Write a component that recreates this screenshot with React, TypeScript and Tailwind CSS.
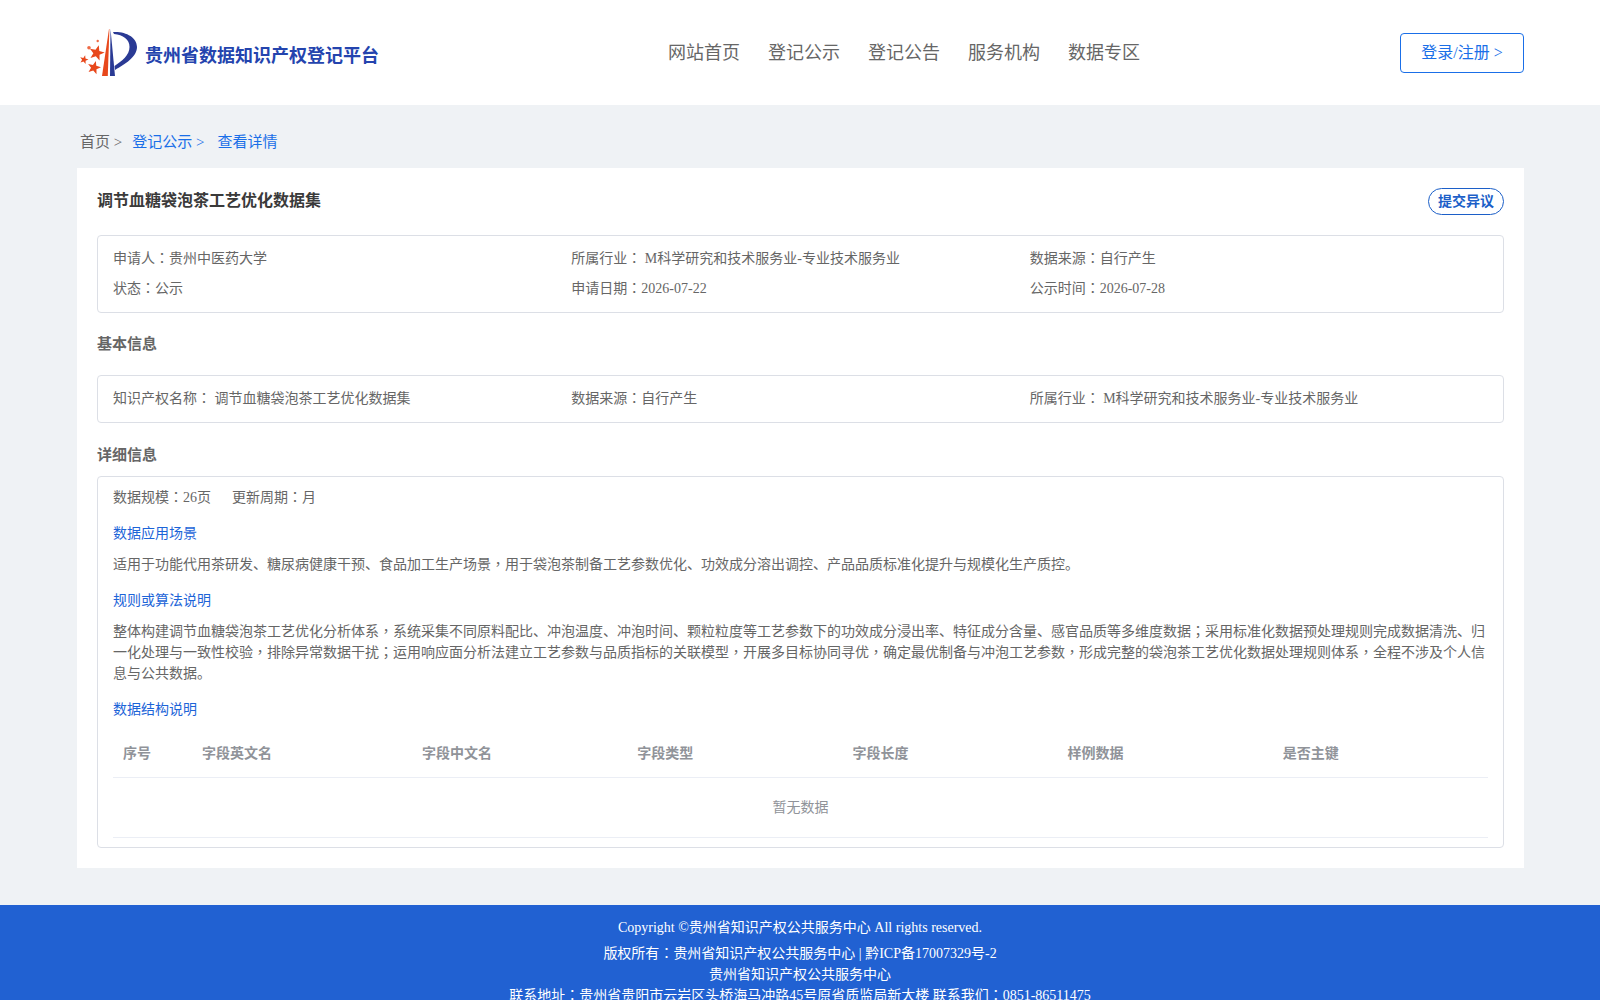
const FONT = "font-['Liberation_Serif','Noto_Sans_CJK_SC',serif]";

function star(cx: number, cy: number, r: number, rot: number) {
  const pts: string[] = [];
  for (let i = 0; i < 10; i++) {
    const rad = i % 2 === 0 ? r : r * 0.42;
    const a = ((-90 + rot + i * 36) * Math.PI) / 180;
    pts.push(`${(cx + rad * Math.cos(a)).toFixed(2)},${(cy + rad * Math.sin(a)).toFixed(2)}`);
  }
  return pts.join(" ");
}

function Logo() {
  return (
    <svg width="58" height="50" viewBox="0 0 58 50" className="mt-px shrink-0">
      <path d="M22 48 L29 1 L29.4 1 L27.8 48 Z" fill="#e8481c" />
      <path d="M30.5 1 L30 48 L35 48 Z" fill="#2a3a94" />
      <path d="M33 4 C45 3 57 9 57 19 C57 29 45 36 35 42 L34.5 38 C42 33 49.5 27 49.5 19 C49.5 11 43 7 34 6 Z" fill="#2a3a94" />
      <polygon points={star(16.7, 25, 8, 15)} fill="#e8481c" />
      <polygon points={star(14, 39.7, 7, 15)} fill="#e8481c" />
      <polygon points={star(4, 31.7, 4.5, 15)} fill="#e8481c" />
      <circle cx="9" cy="19.7" r="1.8" fill="#ef6a45" />
      <circle cx="17.7" cy="13" r="1.2" fill="#ef6a45" />
    </svg>
  );
}

// The reference centres ， ； ： in their em box; the TC face draws them that way.
function T({ children }: { children: string }) {
  return (
    <>
      {children.split(/([，；：])/).map((part, i) =>
        i % 2 === 1 ? (
          <span key={i} className="font-['Noto_Sans_CJK_TC'] leading-[0]">
            {part}
          </span>
        ) : (
          part
        ),
      )}
    </>
  );
}

function Field({ children }: { children: string }) {
  return (
    <div className="text-sm leading-[30px] text-[#666]">
      <T>{children}</T>
    </div>
  );
}

function SubTitle({ children, className }: { children: React.ReactNode; className: string }) {
  return <div className={"text-sm leading-5 text-[#1c64d8] " + className}>{children}</div>;
}

export default function App() {
  return (
    <div className={"h-[1000px] overflow-hidden bg-[#eff2f5] " + FONT}>
      <header className="h-[105px] bg-white">
        <div className="ml-[77px] mr-[76px] flex h-full items-center">
          <div className="flex w-[591px] items-center pl-[3px]">
            <Logo />
            <span className="ml-[7px] mt-[6px] text-lg font-bold text-[#2444ae]">贵州省数据知识产权登记平台</span>
          </div>
          <nav className="flex flex-1 gap-7 text-lg text-[#666]">
            <span>网站首页</span>
            <span>登记公示</span>
            <span>登记公告</span>
            <span>服务机构</span>
            <span>数据专区</span>
          </nav>
          <div className="flex h-10 w-[124px] items-center justify-center rounded border border-[#1a6fe8] pt-px text-base text-[#1a6fe8]">
            登录/注册 &gt;
          </div>
        </div>
      </header>

      <main className="ml-[77px] mr-[76px]">
        <div className="flex h-[63px] items-center gap-[10px] pl-[3px] pt-[11px] text-[15px]">
          <span className="text-[#666]">首页 &gt;</span>
          <span className="text-[#1a6fe8]">登记公示 &gt;</span>
          <span className="ml-[3px] text-[#1a6fe8]">查看详情</span>
        </div>

        <section className="bg-white px-5 pt-5 pb-5">
          <div className="flex h-[27px] items-start justify-between">
            <h1 className="text-base leading-[26px] font-bold text-[#3a3a3a]">调节血糖袋泡茶工艺优化数据集</h1>
            <div className="flex h-[27px] w-[76px] items-center justify-center rounded-[14px] border border-[#1c5fc8] text-sm font-bold text-[#1c5fc8]">
              提交异议
            </div>
          </div>

          <div className="mt-5 grid grid-cols-3 rounded border border-[#dcdfe6] px-[15px] py-2">
            <Field>申请人：贵州中医药大学</Field>
            <Field>所属行业： M科学研究和技术服务业-专业技术服务业</Field>
            <Field>数据来源：自行产生</Field>
            <Field>状态：公示</Field>
            <Field>申请日期：2026-07-22</Field>
            <Field>公示时间：2026-07-28</Field>
          </div>

          <h2 className="mt-[21px] mb-[21px] text-[15px] leading-5 font-bold text-[#666]">基本信息</h2>

          <div className="grid grid-cols-3 rounded border border-[#dcdfe6] px-[15px] py-2">
            <Field>知识产权名称： 调节血糖袋泡茶工艺优化数据集</Field>
            <Field>数据来源：自行产生</Field>
            <Field>所属行业： M科学研究和技术服务业-专业技术服务业</Field>
          </div>

          <h2 className="mt-[22px] text-[15px] leading-5 font-bold text-[#666]">详细信息</h2>

          <div className="mt-[11px] rounded border border-[#dcdfe6] px-[15px] pt-[11px] pb-[9px]">
            <div className="flex gap-[21px] text-sm leading-5 text-[#666]">
              <span><T>数据规模：26页</T></span>
              <span><T>更新周期：月</T></span>
            </div>
            <SubTitle className="mt-4">数据应用场景</SubTitle>
            <p className="mt-[10px] text-sm leading-[21px] text-[#666]">
              <T>适用于功能代用茶研发、糖尿病健康干预、食品加工生产场景，用于袋泡茶制备工艺参数优化、功效成分溶出调控、产品品质标准化提升与规模化生产质控。</T>
            </p>
            <SubTitle className="mt-4">规则或算法说明</SubTitle>
            <p className="mt-[10px] text-sm leading-[21px] text-[#666]">
              <T>整体构建调节血糖袋泡茶工艺优化分析体系，系统采集不同原料配比、冲泡温度、冲泡时间、颗粒粒度等工艺参数下的功效成分浸出率、特征成分含量、感官品质等多维度数据；采用标准化数据预处理规则完成数据清洗、归一化处理与一致性校验，排除异常数据干扰；运用响应面分析法建立工艺参数与品质指标的关联模型，开展多目标协同寻优，确定最优制备与冲泡工艺参数，形成完整的袋泡茶工艺优化数据处理规则体系，全程不涉及个人信息与公共数据。</T>
            </p>
            <SubTitle className="mt-4">数据结构说明</SubTitle>

            <div className="mt-[10px] grid h-[48px] grid-cols-[79px_220px_repeat(5,1fr)] items-center border-b border-[#ebeef5] text-sm font-bold text-[#909399]">
              <div className="pl-[10px]">序号</div>
              <div className="pl-[10px]">字段英文名</div>
              <div className="pl-[10px]">字段中文名</div>
              <div className="pl-[10px]">字段类型</div>
              <div className="pl-[10px]">字段长度</div>
              <div className="pl-[10px]">样例数据</div>
              <div className="pl-[10px]">是否主键</div>
            </div>
            <div className="flex h-[60px] items-center justify-center border-b border-[#ebeef5] text-sm text-[#909399]">
              暂无数据
            </div>
          </div>
        </section>
      </main>

      <footer className="mt-[37px] h-[120px] bg-[#2161d2] pt-[14px] text-center text-sm text-white">
        <p className="leading-[18px]">Copyright ©贵州省知识产权公共服务中心 All rights reserved.</p>
        <p className="mt-[6px] leading-[21px]"><T>版权所有：贵州省知识产权公共服务中心 | 黔ICP备17007329号-2</T></p>
        <p className="leading-[21px]">贵州省知识产权公共服务中心</p>
        <p className="leading-[21px]"><T>联系地址：贵州省贵阳市云岩区头桥海马冲路45号原省质监局新大楼 联系我们：0851-86511475</T></p>
      </footer>
    </div>
  );
}
